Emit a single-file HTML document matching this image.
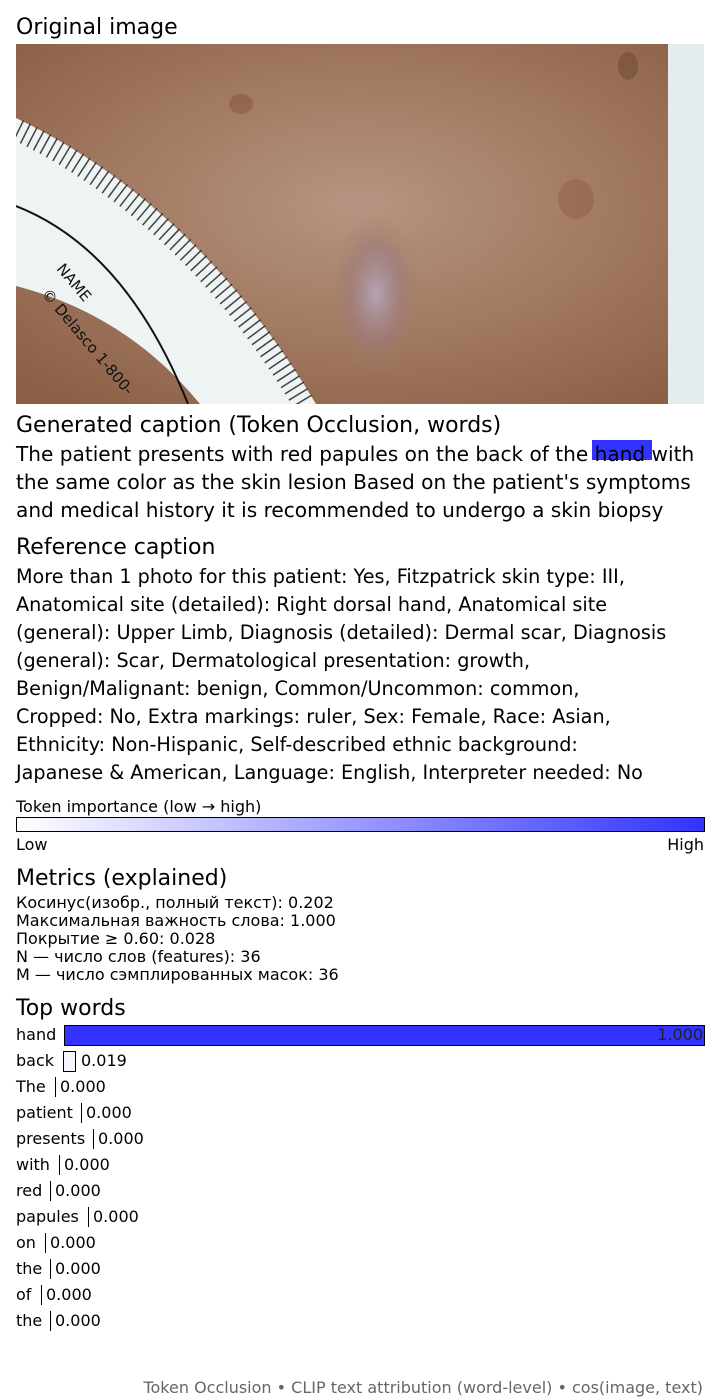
<!DOCTYPE html>
<html><head><meta charset="utf-8"><style>
body{margin:0;width:720px;height:1400px;background:#fff;font-family:"DejaVu Sans","Liberation Sans",sans-serif;color:#000;position:relative;overflow:hidden}
.a{position:absolute;white-space:nowrap}
.h{font-size:22px}
.c{font-size:20.1px;line-height:28px}
.r{font-size:19.2px;line-height:28px}
.s{font-size:16px}
.w{position:absolute;left:16px;font-size:16px}
.b{position:absolute;border-left:1px solid #000;height:20px;padding-left:4px;font-size:16px}
</style></head><body>
<div class="a h" style="left:16px;top:15px">Original image</div>
<svg class="a" style="left:16px;top:44px" width="688" height="360" viewBox="0 0 688 360">
<defs>
<radialGradient id="sk" cx="0.5" cy="0.45" r="0.7"><stop offset="0" stop-color="#b59582"/><stop offset="0.5" stop-color="#a37a62"/><stop offset="1" stop-color="#8a5f46"/></radialGradient>
<radialGradient id="les" cx="0.5" cy="0.5" r="0.5"><stop offset="0" stop-color="#b5a5b5"/><stop offset="0.6" stop-color="#9d7a7c" stop-opacity=".6"/><stop offset="1" stop-color="#a67c63" stop-opacity="0"/></radialGradient>
</defs>
<rect width="688" height="360" fill="url(#sk)"/>
<rect x="652" width="36" height="360" fill="#e4ecef"/>
<ellipse cx="360" cy="250" rx="45" ry="80" fill="url(#les)"/>
<ellipse cx="225" cy="60" rx="12" ry="10" fill="#7f5339" opacity=".5"/>
<ellipse cx="560" cy="155" rx="18" ry="20" fill="#8a5a3e" opacity=".4"/>
<ellipse cx="612" cy="22" rx="10" ry="14" fill="#6e4630" opacity=".5"/>
<path d="M0 74 Q180 160 300 360 L184 360 Q110 270 0 242 Z" fill="#eef3f4"/>
<path d="M0 162 Q110 205 172 360" stroke="#111" stroke-width="2" fill="none"/>
<path d="M2 86 Q175 170 288 360" stroke="#222" stroke-width="22" stroke-dasharray="1.5 6" fill="none" opacity=".85"/>
<text x="40" y="225" font-size="15" fill="#111" transform="rotate(50 40 225)">NAME</text>
<text x="25" y="250" font-size="15" fill="#111" transform="rotate(50 25 250)">© Delasco 1-800-</text>
</svg>
<div class="a h" style="left:16px;top:413px">Generated caption (Token Occlusion, words)</div>
<div class="a" style="left:592px;top:440px;width:60px;height:20px;background:#3333ff"></div>
<div class="a c" style="left:16px;top:440px">The patient presents with red papules on the back of the hand with<br>the same color as the skin lesion Based on the patient's symptoms<br>and medical history it is recommended to undergo a skin biopsy</div>
<div class="a h" style="left:16px;top:535px">Reference caption</div>
<div class="a r" style="left:16px;top:563px">More than 1 photo for this patient: Yes, Fitzpatrick skin type: III,<br>Anatomical site (detailed): Right dorsal hand, Anatomical site<br>(general): Upper Limb, Diagnosis (detailed): Dermal scar, Diagnosis<br>(general): Scar, Dermatological presentation: growth,<br>Benign/Malignant: benign, Common/Uncommon: common,<br>Cropped: No, Extra markings: ruler, Sex: Female, Race: Asian,<br>Ethnicity: Non-Hispanic, Self-described ethnic background:<br>Japanese &amp; American, Language: English, Interpreter needed: No</div>
<div class="a s" style="left:16px;top:797px">Token importance (low → high)</div>
<div class="a" style="left:16px;top:817px;width:687px;height:13px;border:1px solid #000;background:linear-gradient(to right,#fff,#3333ff)"></div>
<div class="a s" style="left:16px;top:835px">Low</div>
<div class="a s" style="right:16px;top:835px">High</div>
<div class="a h" style="left:16px;top:866px">Metrics (explained)</div>
<div class="a s" style="left:16px;top:894px;line-height:18px">Косинус(изобр., полный текст): 0.202<br>Максимальная важность слова: 1.000</div>
<div class="a s" style="left:16px;top:930px;line-height:18px">Покрытие ≥ 0.60: 0.028<br>N — число слов (features): 36<br>M — число сэмплированных масок: 36</div>
<div class="a h" style="left:16px;top:996px">Top words</div>
<div class="w" style="top:1025px">hand</div>
<div class="a" style="left:64px;top:1025px;width:639px;height:19px;border:1px solid #000;background:#3333ff"></div>
<div class="a s" style="right:17px;top:1025px;color:#222">1.000</div>
<div class="w" style="top:1051px">back</div>
<div class="a" style="left:63px;top:1051px;width:11px;height:19px;border:1px solid #000;background:#f6f6ff"></div>
<div class="a s" style="left:81px;top:1051px">0.019</div>
<div class="w" style="top:1077px">The</div><div class="b" style="left:55px;top:1077px">0.000</div>
<div class="w" style="top:1103px">patient</div><div class="b" style="left:81px;top:1103px">0.000</div>
<div class="w" style="top:1129px">presents</div><div class="b" style="left:93px;top:1129px">0.000</div>
<div class="w" style="top:1155px">with</div><div class="b" style="left:59px;top:1155px">0.000</div>
<div class="w" style="top:1181px">red</div><div class="b" style="left:50px;top:1181px">0.000</div>
<div class="w" style="top:1207px">papules</div><div class="b" style="left:88px;top:1207px">0.000</div>
<div class="w" style="top:1233px">on</div><div class="b" style="left:45px;top:1233px">0.000</div>
<div class="w" style="top:1259px">the</div><div class="b" style="left:50px;top:1259px">0.000</div>
<div class="w" style="top:1285px">of</div><div class="b" style="left:41px;top:1285px">0.000</div>
<div class="w" style="top:1311px">the</div><div class="b" style="left:50px;top:1311px">0.000</div>
<div class="a" style="right:17px;top:1378px;font-size:16px;color:#666">Token Occlusion • CLIP text attribution (word-level) • cos(image, text)</div>
</body></html>
